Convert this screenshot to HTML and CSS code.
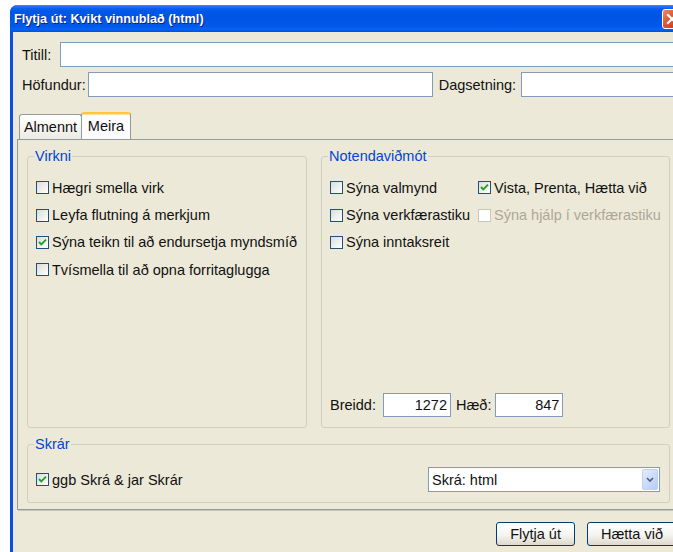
FILE: index.html
```html
<!DOCTYPE html>
<html lang="is">
<head>
<meta charset="utf-8">
<title>Flytja út</title>
<link rel="stylesheet" href="styles.css">
</head>
<body>
<div class="window">
  <div class="titlebar">
    <span class="title">Flytja út: Kvikt vinnublað (html)</span>
    <span class="close">
      <svg width="19" height="19" viewBox="0 0 19 19"><path d="M5 5 L13 13 M13 5 L5 13" stroke="#fff" stroke-width="2.2" stroke-linecap="square"/></svg>
    </span>
  </div>

  <div class="client">
    <div class="row row-first">
      <span class="lbl lbl-title">Titill:</span>
      <input class="field grow" type="text">
    </div>
    <div class="row">
      <span class="lbl lbl-author">Höfundur:</span>
      <input class="field author" type="text">
      <span class="lbl lbl-date">Dagsetning:</span>
      <input class="field grow" type="text">
    </div>

    <div class="tabs">
      <div class="tab">Almennt</div>
      <div class="tab active">Meira</div>
    </div>

    <div class="panel">
      <div class="groups">
        <fieldset class="group">
          <legend>Virkni</legend>
          <div class="checks">
            <div class="check"><span class="box"></span>Hægri smella virk</div>
            <div class="check"><span class="box"></span>Leyfa flutning á merkjum</div>
            <div class="check"><span class="box on"><svg width="11" height="11" viewBox="0 0 11 11"><path d="M2 5 L4.3 7.4 L9 2.6" fill="none" stroke="#21A121" stroke-width="1.9"/></svg></span>Sýna teikn til að endursetja myndsmíð</div>
            <div class="check"><span class="box"></span>Tvísmella til að opna forritaglugga</div>
          </div>
        </fieldset>

        <fieldset class="group">
          <legend>Notendaviðmót</legend>
          <div class="checks grid2">
            <div class="check"><span class="box"></span>Sýna valmynd</div>
            <div class="check"><span class="box on"><svg width="11" height="11" viewBox="0 0 11 11"><path d="M2 5 L4.3 7.4 L9 2.6" fill="none" stroke="#21A121" stroke-width="1.9"/></svg></span>Vista, Prenta, Hætta við</div>
            <div class="check"><span class="box"></span>Sýna verkfærastiku</div>
            <div class="check disabled"><span class="box"></span>Sýna hjálp í verkfærastiku</div>
            <div class="check"><span class="box"></span>Sýna inntaksreit</div>
          </div>
          <div class="size-row">
            <span class="lbl lbl-width">Breidd:</span>
            <input class="field num" type="text" value="1272">
            <span class="lbl lbl-height">Hæð:</span>
            <input class="field num" type="text" value="847">
          </div>
        </fieldset>
      </div>

      <fieldset class="group files">
        <legend>Skrár</legend>
        <div class="files-row">
          <div class="check"><span class="box on"><svg width="11" height="11" viewBox="0 0 11 11"><path d="M2 5 L4.3 7.4 L9 2.6" fill="none" stroke="#21A121" stroke-width="1.9"/></svg></span>ggb Skrá &amp; jar Skrár</div>
          <div class="combo">
            <span class="combo-text">Skrá: html</span>
            <span class="arrow"><svg width="14" height="19" viewBox="0 0 14 19"><path d="M4 8 L7 11 L10 8" fill="none" stroke="#4D6185" stroke-width="1.6"/></svg></span>
          </div>
        </div>
      </fieldset>
    </div>

    <div class="actions">
      <button type="button">Flytja út</button>
      <button type="button">Hætta við</button>
    </div>
  </div>
</div>
</body>
</html>
```

FILE: styles.css
```css
* {
  box-sizing: border-box;
}

html,
body {
  margin: 0;
  height: 100%;
  overflow: hidden;
  background: #fff;
}

body {
  font-family: "Liberation Sans", Arial, sans-serif;
  font-size: 14.5px;
  color: #111;
}

/* XP style window frame */
.window {
  margin: 5px 0 0 10px;
  width: 677px;
  height: 547px;
  background: #0B50E6;
  border-radius: 8px 8px 0 0;
  display: flex;
  flex-direction: column;
}

.titlebar {
  flex: none;
  height: 27px;
  display: flex;
  align-items: center;
  padding: 1px 4px 0 4px;
  border-radius: 7px 7px 0 0;
  background: linear-gradient(to bottom,
    #3C8CF8 0px, #2A7BF7 1px, #0D63F0 3px, #0057E8 6px,
    #0054E3 50%, #0058EA 78%, #0463F5 90%, #0050DD 100%);
}

.title {
  color: #fff;
  font-weight: bold;
  font-size: 12.7px;
  text-shadow: 1px 1px 0 #0F1E8C;
  white-space: nowrap;
}

.close {
  margin-left: auto;
  width: 21px;
  height: 20px;
  border: 1px solid #fff;
  border-radius: 3px;
  background: linear-gradient(135deg, #E9896A 0%, #D9562E 45%, #C5380F 100%);
  display: flex;
  align-items: center;
  justify-content: center;
}

.client {
  flex: 1;
  margin: 0 3px;
  background: #ECE9D8;
  padding: 0 4px;
  overflow: hidden;
}

/* header fields */
.row {
  display: flex;
  align-items: center;
  height: 25px;
  margin-top: 5px;
  padding-left: 5px;
}

.row-first {
  margin-top: 10px;
}

.lbl {
  white-space: nowrap;
}

.lbl-title {
  margin-right: 9px;
}

.lbl-author {
  margin-right: 2px;
}

.lbl-date {
  margin: 0 5px 0 6px;
}

.field {
  height: 25px;
  border: 1px solid #7F9DB9;
  background: #fff;
  font: inherit;
  color: #111;
  padding: 0 3px;
  margin: 0;
  outline: none;
  border-radius: 0;
}

.grow {
  flex: 1;
  min-width: 0;
}

.author {
  width: 345px;
}

/* tab strip */
.tabs {
  margin-top: 15px;
  height: 27px;
  display: flex;
  align-items: flex-end;
  padding-left: 2px;
}

.tab {
  height: 25px;
  width: 63px;
  display: flex;
  align-items: center;
  justify-content: center;
  padding-bottom: 1px;
  border: 1px solid #919B9C;
  border-bottom: none;
  border-radius: 3px 3px 0 0;
  background: linear-gradient(#FFFFFF, #F3F3EF 60%, #ECEBE6);
}

.tab.active {
  height: 27px;
  width: 50px;
  margin-left: -1px;
  padding-bottom: 2px;
  background: #FCFCFE;
  border-top: 2px solid #FFC83C;
  box-shadow: inset 0 1px 0 #FFE29A;
}

.panel {
  border: 1px solid #919B9C;
  box-shadow: 1px 1px 0 #C9C6B6;
  padding: 8px 9px 6px;
}

/* group boxes */
.groups {
  display: grid;
  grid-template-columns: 280px 1fr;
  column-gap: 14px;
  height: 280px;
}

.group {
  margin: 0;
  min-width: 0;
  border: 1px solid #D0D0BF;
  border-radius: 3px;
  padding: 0 8px;
}

.group legend {
  color: #0046D5;
  padding: 0 1px;
  margin-left: -2px;
  line-height: 17px;
}

.groups .group {
  display: flex;
  flex-direction: column;
  padding-bottom: 10px;
}

.checks {
  margin-top: 9px;
}

.grid2 {
  display: grid;
  grid-template-columns: 148px auto;
}

.check {
  display: flex;
  align-items: center;
  gap: 3px;
  height: 27.4px;
  white-space: nowrap;
}

.box {
  flex: none;
  width: 13px;
  height: 13px;
  border: 1px solid #1C5180;
  background: linear-gradient(135deg, #DCDCD7, #FFFFFF);
  display: flex;
  align-items: center;
  justify-content: center;
}

.check.disabled {
  color: #ACA899;
}

.check.disabled .box {
  border-color: #CAC8BB;
  background: #fff;
}

.size-row {
  margin-top: auto;
  display: flex;
  align-items: center;
  height: 24px;
}

.num {
  width: 68px;
  height: 24px;
  text-align: right;
}

.lbl-width {
  margin-right: 7px;
}

.lbl-height {
  margin: 0 4px 0 5px;
}

.files {
  margin-top: 8px;
  padding: 0 9px 10px 8px;
}

.files-row {
  margin-top: 14px;
  height: 25px;
  display: flex;
  align-items: center;
  justify-content: space-between;
}

.files-row .check {
  height: 23px;
}

.combo {
  width: 232px;
  height: 25px;
  border: 1px solid #7F9DB9;
  background: #fff;
  display: flex;
  align-items: center;
  padding: 0 1px 0 3px;
}

.arrow {
  margin-left: auto;
  width: 16px;
  height: 21px;
  border: 1px solid #BFD0F5;
  border-radius: 2px;
  background: linear-gradient(135deg, #E2EBFE, #B9CCF8);
  display: flex;
  align-items: center;
  justify-content: center;
}

/* dialog buttons */
.actions {
  display: flex;
  justify-content: flex-end;
  gap: 12px;
  margin-top: 12px;
  padding-right: 3px;
}

.actions button {
  height: 24px;
  padding: 0 13px;
  font: inherit;
  color: #111;
  border: 1px solid #003C74;
  border-radius: 3px;
  background: linear-gradient(#FFFFFF, #F4F4F0 55%, #DDD8CC);
}
```
